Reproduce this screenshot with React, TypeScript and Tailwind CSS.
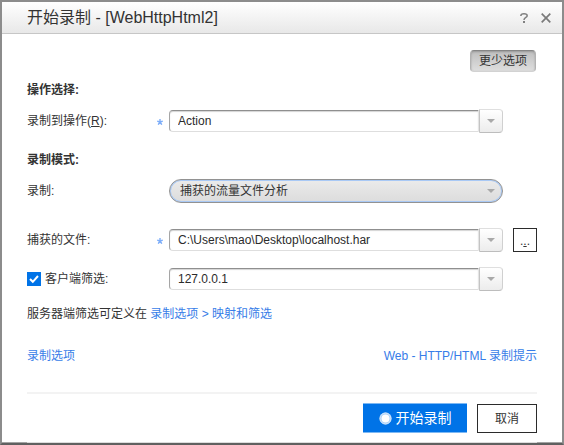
import React, { useState } from "react";

const inputClass =
  "h-[22px] min-w-0 flex-1 rounded-l-[4px] border border-t-[#8f8f8f] border-r-[#e4e4e4] border-b-[#dedede] border-l-[#a5a5a5] bg-white px-2 text-[12px] leading-[18px] text-[#2b2b2b] shadow-[inset_0_1px_1px_#d4d4d4] outline-none";

function Arrow() {
  return (
    <svg width="8" height="4" viewBox="0 0 8 4" aria-hidden="true">
      <path d="M0 0h8L4 4z" fill="#a9a9a9" />
    </svg>
  );
}

function ComboBox({ id, initial }: { id: string; initial: string }) {
  const [value, setValue] = useState(initial);
  return (
    <div className="flex h-6 min-w-0 flex-1 items-center">
      <input id={id} type="text" value={value} onChange={(e) => setValue(e.target.value)} className={inputClass} />
      <button
        type="button"
        aria-label="展开列表"
        className="flex h-6 w-6 shrink-0 items-center justify-center rounded-r-[4px] border border-t-[#dfdfdf] border-r-[#d0d0d0] border-b-[#bdbdbd] border-l-[#c4c4c4] bg-linear-to-b from-white to-[#ececec]"
      >
        <Arrow />
      </button>
    </div>
  );
}

function Required() {
  return (
    <svg className="mt-[2px]" width="6" height="6" viewBox="0 0 6 6" aria-hidden="true">
      <path d="M3 3V0M3 3L.2 2.2M3 3l2.8-.8M3 3L1.2 5.7M3 3l1.8 2.7" stroke="#7eaef9" strokeWidth="1.4" />
    </svg>
  );
}

const labelCell = "flex w-[142px] shrink-0 items-center justify-between pr-[6px]";

export default function App() {
  const [filter, setFilter] = useState(true);
  return (
    <main className="border-2 border-[#8c8c8c] border-b-[#606060] bg-white font-['Liberation_Sans','Noto_Sans_CJK_SC',sans-serif] text-[12px] leading-[18px] text-[#333]">
      <header className="flex h-8 items-center justify-between border-b border-[#c6c6c6] bg-linear-to-b from-white to-[#e8e8e8] pr-[11px] pl-[25px]">
        <h1 className="text-[16px] leading-6">开始录制 - [WebHttpHtml2]</h1>
        <div className="flex items-center gap-[13px]">
          <button type="button" aria-label="帮助" className="h-[10px] w-[8px]">
            <svg width="8" height="10" viewBox="0 0 8 10" aria-hidden="true">
              <path d="M.8 3C.8 1.5 2 .8 4 .8S7.2 1.5 7.2 2.8C7.2 4.6 4 4.4 4 7" fill="none" stroke="#808080" strokeWidth="1.5" />
              <path d="M3 8h2v2H3z" fill="#808080" />
            </svg>
          </button>
          <button type="button" aria-label="关闭" className="h-[10px] w-[10px]">
            <svg width="10" height="10" viewBox="0 0 10 10" aria-hidden="true">
              <path d="M.7 .7l8.6 8.6M9.3 .7L.7 9.3" stroke="#7a7a7a" strokeWidth="1.7" />
            </svg>
          </button>
        </div>
      </header>

      <form className="px-[25px] pt-4" onSubmit={(e) => e.preventDefault()}>
        <div className="flex justify-end pr-px">
          <button
            type="button"
            className="h-[22px] rounded-[4px] border border-t-[#858585] border-r-[#b2b2b2] border-b-[#d2d2d2] border-l-[#b2b2b2] bg-linear-to-b from-[#bfbfbf] to-[#dedede] px-2 shadow-[inset_0_1px_2px_#999]"
          >
            更少选项
          </button>
        </div>

        <h2 className="mt-[9px] font-bold">操作选择:</h2>
        <div className="mt-[10px] mr-[34px] flex items-center">
          <div className={labelCell}>
            <label htmlFor="action">
              录制到操作(<u>R</u>):
            </label>
            <Required />
          </div>
          <ComboBox id="action" initial="Action" />
        </div>

        <h2 className="mt-[18px] font-bold">录制模式:</h2>
        <div className="mt-[10px] mr-[34px] flex items-center">
          <label htmlFor="mode" className={labelCell}>
            录制:
          </label>
          <div className="grid min-w-0 flex-1 items-center">
            <select
              id="mode"
              className="col-start-1 row-start-1 h-6 w-full appearance-none rounded-full border border-[#929292] bg-linear-to-b from-[#ebebeb] to-[#dcdcdc] px-[10px] shadow-[inset_0_0_0_1px_#a9c9f5] outline-none"
            >
              <option>捕获的流量文件分析</option>
            </select>
            <span className="pointer-events-none col-start-1 row-start-1 mr-2 flex justify-end">
              <Arrow />
            </span>
          </div>
        </div>

        <div className="mt-[25px] flex items-center">
          <div className={labelCell}>
            <label htmlFor="file">捕获的文件:</label>
            <Required />
          </div>
          <ComboBox id="file" initial="C:\Users\mao\Desktop\localhost.har" />
          <button type="button" aria-label="浏览" className="ml-[10px] h-6 w-6 shrink-0 border border-[#2b2b2b] bg-white pt-[2px]">
            .<u>.</u>.
          </button>
        </div>

        <div className="mt-[15px] mr-[34px] flex items-center">
          <label className="flex w-[142px] shrink-0 items-center gap-[4px]">
            <span className="grid">
              <input
                type="checkbox"
                checked={filter}
                onChange={(e) => setFilter(e.target.checked)}
                className="peer col-start-1 row-start-1 h-[14px] w-[14px] appearance-none border border-[#0073e7] bg-white checked:bg-[#0073e7]"
              />
              <svg className="pointer-events-none invisible col-start-1 row-start-1 peer-checked:visible" width="14" height="14" viewBox="0 0 14 14" aria-hidden="true">
                <path d="M3 7l2.8 2.8L11 4" fill="none" stroke="#fff" strokeWidth="2" />
              </svg>
            </span>
            客户端筛选:
          </label>
          <ComboBox id="client" initial="127.0.0.1" />
        </div>

        <p className="mt-[14px]">
          服务器端筛选可定义在{" "}
          <a href="#mapping" className="text-[#377de8]">
            录制选项 &gt; 映射和筛选
          </a>
        </p>

        <nav className="mt-6 flex justify-between text-[#377de8]">
          <a href="#options">录制选项</a>
          <a href="#tips">Web - HTTP/HTML 录制提示</a>
        </nav>

        <hr className="mt-[27px] h-[2px] border-0 bg-[#f3f3f3]" />
        <footer className="mt-[9px] flex items-end justify-end gap-[10px] pb-[9px]">
          <button
            type="submit"
            className="flex h-[30px] w-[104px] items-center justify-center gap-[4px] border-y border-[#7db8f3] bg-[#0073e7] text-[14px] text-white"
          >
            <svg width="13" height="13" viewBox="0 0 13 13" aria-hidden="true">
              <circle cx="6.5" cy="6.5" r="6" fill="#a6cdf6" />
              <circle cx="6.5" cy="6.5" r="5.5" fill="none" stroke="#d9eafb" strokeWidth="1" />
              <circle cx="6.5" cy="6.5" r="4" fill="#fff" />
            </svg>
            开始录制
          </button>
          <button type="button" className="h-[29px] w-[60px] border border-[#2b2b2b] bg-white">
            取消
          </button>
        </footer>
      </form>
      <div className="flex h-px bg-[#a3a3a3] px-[25px]">
        <div className="flex-1 bg-[#dcdcdc]" />
      </div>
    </main>
  );
}
